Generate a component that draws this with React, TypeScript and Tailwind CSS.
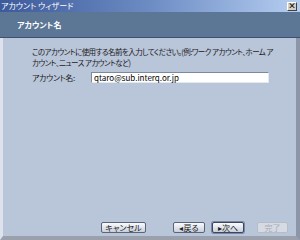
const jp = { fontFamily: '"Noto Sans CJK JP", "Noto Sans", sans-serif' };

const Btn = ({ label, width, disabled, primary }: { label: string; width: string; disabled?: boolean; primary?: boolean }) => (
  <div
    className={`${width} h-[11px] flex items-center justify-center rounded-[2px] border text-[8px] leading-none ${
      disabled
        ? "border-[#b6bcc8] bg-[#d6dae2] text-[#a8adb8]"
        : primary
        ? "border-[#3c465c] bg-gradient-to-b from-[#fafbfd] to-[#c9cfda] text-[#202020] ring-1 ring-[#7888a8]"
        : "border-[#5a6478] bg-gradient-to-b from-[#fafbfd] to-[#c9cfda] text-[#202020]"
    }`}
  >
    {label}
  </div>
);

export default function App() {
  return (
    <div className="w-[300px] h-[240px] flex flex-col bg-[#b9c5d9] overflow-hidden [font-feature-settings:'palt']" style={jp}>
      <div className="h-[12px] shrink-0 flex items-center justify-between bg-gradient-to-r from-[#3d5a9a] via-[#6d8cc4] to-[#b6cef0] pl-[1px] pr-[3px]">
        <span className="text-[8px] leading-none text-white">アカウント ウィザード</span>
        <div className="w-[10px] h-[9px] bg-[#d4d0c8] border border-t-white border-l-white border-r-[#404040] border-b-[#404040] flex items-center justify-center text-[8px] leading-none font-bold text-black">×</div>
      </div>
      <div className="h-[26px] shrink-0 flex items-center bg-[#5c7696] border-b border-b-[#3e5270] pl-[17px]">
        <span className="text-[8px] font-bold text-white">アカウント名</span>
      </div>
      <div className="flex-1 flex flex-col border-l-[3px] border-l-[#dde2ec] border-r-[4px] border-r-[#8c96a8] border-b-[4px] border-b-[#9aa0ac] pl-[29px] pr-[4px] pt-[8px] pb-[3px]">
        <div className="h-[11px] flex items-center text-[7.5px] leading-none tracking-[-0.55px] text-[#1a1a1a] whitespace-nowrap">
          このアカウントに使用する名前を入力してください。(例:ワーク アカウント、ホーム ア
        </div>
        <div className="h-[11px] flex items-center text-[7.5px] leading-none tracking-[-0.55px] text-[#1a1a1a] whitespace-nowrap">
          カウント、ニュース アカウントなど)
        </div>
        <div className="h-[11px] flex items-center mt-[4px]">
          <span className="w-[59px] text-[8px] leading-none tracking-[-0.4px] text-[#1a1a1a]">アカウント名:</span>
          <div className="w-[178px] h-[11px] bg-white border border-t-[#7c889c] border-l-[#7c889c] border-r-[#e4e8f0] border-b-[#e4e8f0] flex items-center pl-[2px] text-[8px] leading-none text-black">
            qtaro@sub.interq.or.jp
          </div>
        </div>
        <div className="mt-auto flex items-center">
          <div className="w-[69px]" />
          <Btn label="キャンセル" width="w-[45px]" />
          <div className="w-[27px]" />
          <Btn label="◂戻る" width="w-[32px]" />
          <div className="w-[7px]" />
          <Btn label="▸次へ" width="w-[32px]" primary />
          <div className="w-[13px]" />
          <Btn label="完了" width="w-[31px]" disabled />
        </div>
      </div>
    </div>
  );
}
